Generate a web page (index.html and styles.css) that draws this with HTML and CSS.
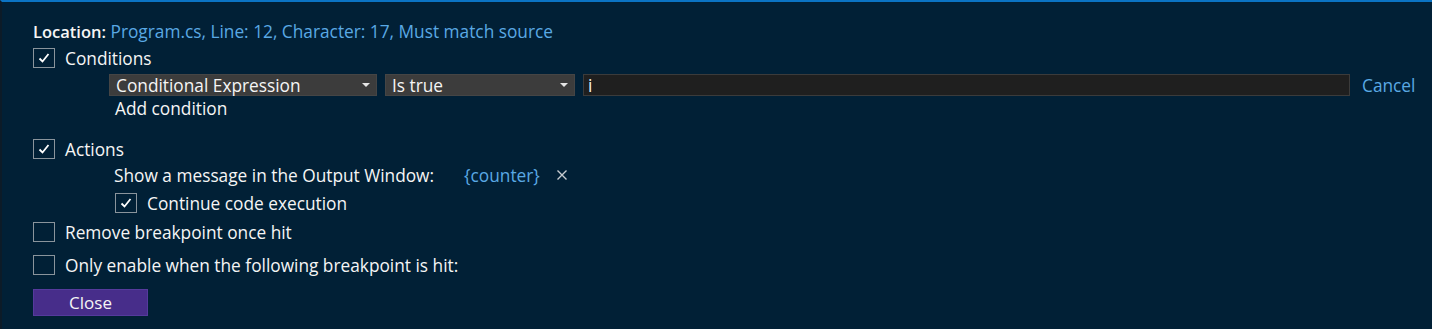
FILE: index.html
```html
<!DOCTYPE html>
<html>
<head>
<meta charset="utf-8">
<link rel="stylesheet" href="styles.css">
</head>
<body>
<div class="panel">
  <div class="row r-loc"><span class="label">Location:</span>&nbsp;<span class="link">Program.cs, Line: 12, Character: 17, Must match source</span></div>
  <div class="row r-cond"><span class="cb checked"><svg viewBox="0 0 20 20" width="20" height="20"><polyline points="5.5,10.5 8.5,13.5 14.5,6" fill="none" stroke="#fff" stroke-width="1.8"/></svg></span><span class="cb-text">Conditions</span></div>
  <div class="row r-drop">
    <div class="select s1"><span>Conditional Expression</span><span class="arrow"></span></div>
    <div class="select s2"><span>Is true</span><span class="arrow"></span></div>
    <div class="input">i</div>
    <span class="link cancel">Cancel</span>
  </div>
  <div class="row r-add"><span>Add condition</span></div>
  <div class="row r-act"><span class="cb checked"><svg viewBox="0 0 20 20" width="20" height="20"><polyline points="5.5,10.5 8.5,13.5 14.5,6" fill="none" stroke="#fff" stroke-width="1.8"/></svg></span><span class="cb-text">Actions</span></div>
  <div class="row r-msg"><span class="msg">Show a message in the Output Window:</span><span class="link counter">{counter}</span><svg class="x" viewBox="0 0 12 12" width="12" height="12"><path d="M1.5 1.5 L10.5 10.5 M10.5 1.5 L1.5 10.5" stroke="#c8ccd0" stroke-width="1.4"/></svg></div>
  <div class="row r-cont"><span class="cb checked"><svg viewBox="0 0 20 20" width="20" height="20"><polyline points="5.5,10.5 8.5,13.5 14.5,6" fill="none" stroke="#fff" stroke-width="1.8"/></svg></span><span class="cb-text">Continue code execution</span></div>
  <div class="row r-rem"><span class="cb"></span><span class="cb-text">Remove breakpoint once hit</span></div>
  <div class="row r-only"><span class="cb"></span><span class="cb-text">Only enable when the following breakpoint is hit:</span></div>
  <div class="row r-close"><button class="btn">Close</button></div>
</div>
</body>
</html>
```
FILE: styles.css
```css
html, body {
  margin: 0;
  padding: 0;
  background: #012036;
}
body {
  width: 1432px;
  height: 329px;
  overflow: hidden;
  font-family: "Open Sans", "Noto Sans", sans-serif;
  font-size: 17.3px;
  color: #f5f5f5;
}
.panel {
  box-sizing: border-box;
  height: 329px;
  border-top: 2px solid #0b74c4;
  border-left: 2px solid #0c1b28;
  padding-left: 31px;
  padding-top: 19px;
  display: flex;
  flex-direction: column;
}
.row {
  display: flex;
  align-items: center;
  height: 20px;
  white-space: nowrap;
}
.label { font-weight: 600; font-size: 16.5px; }
.link { color: #5aa9e4; }
.cb {
  box-sizing: border-box;
  width: 22px;
  height: 20px;
  border: 1px solid #8a949c;
  display: inline-flex;
  align-items: center;
  justify-content: center;
  flex: none;
}
.cb-text { margin-left: 10px; }
.r-cond { margin-top: 7px; }
.r-drop { margin-top: 6px; height: 22px; padding-left: 76px; }
.select {
  box-sizing: border-box;
  height: 22px;
  background: #3c3c3c;
  border: 1px solid #454545;
  display: flex;
  align-items: center;
  justify-content: space-between;
  padding: 0 6px 0 6px;
}
.s1 { width: 268px; }
.s2 { width: 190px; margin-left: 8px; }
.arrow {
  width: 0;
  height: 0;
  border-left: 4px solid transparent;
  border-right: 4px solid transparent;
  border-top: 4px solid #e6e6e6;
}
.input {
  box-sizing: border-box;
  width: 767px;
  height: 22px;
  margin-left: 8px;
  background: #1f1f1f;
  border: 1px solid #3b3b3b;
  padding-left: 4px;
  display: flex;
  align-items: center;
}
.cancel { margin-left: 12px; }
.r-add { margin-top: 3px; height: 18px; padding-left: 82px; }
.r-act { margin-top: 22px; }
.r-msg { margin-top: 6px; padding-left: 81px; }
.counter { margin-left: 30px; }
.x { margin-left: 16px; }
.r-cont { margin-top: 8px; padding-left: 82px; }
.r-rem { margin-top: 9px; }
.r-only { margin-top: 13px; }
.r-close { margin-top: 14px; height: 27px; }
.btn {
  width: 115px;
  height: 27px;
  background: #472d8a;
  border: 1px solid #553a9c;
  color: #f5f5f5;
  font-family: inherit;
  font-size: 17px;
  padding: 0;
}
```
